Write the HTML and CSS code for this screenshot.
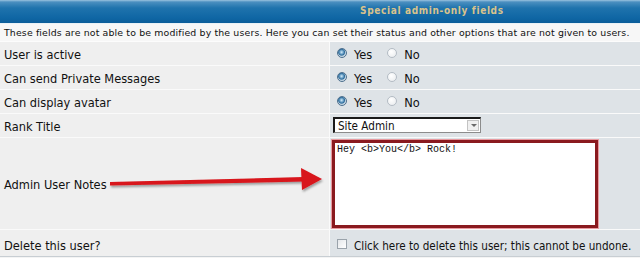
FILE: index.html
```html
<!DOCTYPE html>
<html lang="en">
<head>
    <meta charset="UTF-8">
    <title>Special admin-only fields</title>
    <link rel="stylesheet" href="styles.css">
</head>
<body>

<div class="forumline">
    <div class="th">Special admin-only fields</div>
    <div class="explain">These fields are not able to be modified by the users. Here you can set their status and other options that are not given to users.</div>

    <div class="row">
        <div class="row1">User is active</div>
        <div class="row2">
            <span class="radio checked"></span><span class="opt">Yes</span>
            <span class="radio"></span><span class="opt">No</span>
        </div>
    </div>
    <div class="row">
        <div class="row1">Can send Private Messages</div>
        <div class="row2">
            <span class="radio checked"></span><span class="opt">Yes</span>
            <span class="radio"></span><span class="opt">No</span>
        </div>
    </div>
    <div class="row">
        <div class="row1">Can display avatar</div>
        <div class="row2">
            <span class="radio checked"></span><span class="opt">Yes</span>
            <span class="radio"></span><span class="opt">No</span>
        </div>
    </div>
    <div class="row">
        <div class="row1">Rank Title</div>
        <div class="row2">
            <div class="select">
                <span>Site Admin</span>
                <span class="select-btn"></span>
            </div>
        </div>
    </div>
    <div class="row notes-row">
        <div class="row1">
            Admin User Notes
            <!-- red arrow pointing at the notes box -->
            <svg class="arrow" width="220" height="30" viewBox="0 0 220 30">
                <defs>
                    <filter id="shadow" x="-10%" y="-50%" width="120%" height="200%">
                        <feDropShadow dx="1" dy="2" stdDeviation="1.2" flood-color="#000" flood-opacity="0.35"/>
                    </filter>
                </defs>
                <g filter="url(#shadow)">
                    <path d="M2 18 L196 13 L196 17.5 L2 21.5 Z" fill="#d8141a"/>
                    <path d="M193 4 L214 15 L194 26 Z" fill="#d8141a"/>
                </g>
            </svg>
        </div>
        <div class="row2">
            <div class="notes">Hey &lt;b&gt;You&lt;/b&gt; Rock!</div>
        </div>
    </div>
    <div class="row last">
        <div class="row1">Delete this user?</div>
        <div class="row2">
            <span class="checkbox"></span><span class="opt">Click here to delete this user; this cannot be undone.</span>
        </div>
    </div>
</div>

</body>
</html>
```

FILE: styles.css
```css
body {
    margin: 0;
    padding: 0;
    background-color: #dee3e7;
    font-family: "DejaVu Sans Condensed", "DejaVu Sans", Verdana, sans-serif;
    font-stretch: condensed;
    color: #111;
}

.forumline {
    width: 640px;
    height: 258px;
    background-color: #f4f4f4;
    overflow: hidden;
}

.th {
    height: 24px;
    box-sizing: border-box;
    padding: 5px 0 0 360px;
    background: linear-gradient(#9cc3df 0, #4b8fc0 2px, #1f73ad 8px, #0f66a4 18px, #0b5c98 24px);
    color: #d9c38c;
    font-size: 10px;
    font-weight: bold;
    letter-spacing: 0.65px;
    border-bottom: 1px solid #e9f1f6;
}

.explain {
    height: 18px;
    box-sizing: border-box;
    padding: 3px 0 0 4px;
    background-color: #f7f7f7;
    font-family: "DejaVu Sans", Verdana, sans-serif;
    font-stretch: normal;
    font-size: 9.4px;
    letter-spacing: 0.14px;
    white-space: nowrap;
    border-bottom: 1px solid #fcfcfc;
}

.row {
    display: grid;
    grid-template-columns: 329px 1fr;
    gap: 1px;
    background-color: #fafafa;
    height: 23px;
    border-bottom: 1px solid #fafafa;
}

.row1, .row2 {
    display: flex;
    align-items: center;
    padding-top: 2px;
    font-size: 12.7px;
}

.row1 {
    background-color: #efefef;
    padding-left: 4px;
    position: relative;
}

.row2 {
    background-color: #dee3e7;
    padding-left: 7px;
}

.notes-row {
    height: 91px;
}

.last {
    height: 26px;
    border-bottom: 1px solid #c8ced3;
}

.last .row1, .last .row2 {
    padding-top: 5px;
}

.opt {
    margin-left: 7px;
    margin-right: 15px;
}

.radio {
    width: 10px;
    height: 10px;
    border-radius: 50%;
    box-sizing: border-box;
    border: 1px solid #b4bcc4;
    background: radial-gradient(circle at 40% 35%, #ffffff 0, #eef0f2 70%);
    margin-top: -4px;
}

.radio.checked {
    border-color: #4c6f8d;
    background: radial-gradient(circle at 45% 40%, #d8ecf8 0, #7fb0d2 1.5px, #2f6d9c 3px, #c9d9e5 4px);
}

.select {
    width: 148px;
    height: 16px;
    box-sizing: border-box;
    margin-left: -4px;
    margin-top: -3px;
    background-color: #fff;
    border: 1px solid #8c8c8c;
    border-top: 2px solid #1a1a1a;
    border-left: 2px solid #1a1a1a;
    display: flex;
    align-items: center;
    justify-content: space-between;
    padding-left: 3px;
    font-size: 11.6px;
}

.select-btn {
    width: 12px;
    height: 11px;
    margin-right: 1px;
    box-sizing: border-box;
    border: 1px solid #c3c3c3;
    background: #f0f0f0;
    position: relative;
}

.select-btn::after {
    content: "";
    position: absolute;
    left: 3px;
    top: 3px;
    border-left: 3px solid transparent;
    border-right: 3px solid transparent;
    border-top: 3px solid #6a6a6a;
}

.notes-row .row2 {
    padding-left: 2px;
    align-items: flex-start;
    padding-top: 2px;
}

.notes {
    width: 266px;
    height: 88px;
    box-sizing: border-box;
    background-color: #fff;
    border: 3px solid #8a1a1f;
    box-shadow: 0 0 0 1px #e89aa0;
    padding: 1px 2px;
    font-family: "Liberation Mono", monospace;
    font-size: 10px;
}

.arrow {
    position: absolute;
    left: 108px;
    top: 26px;
}

.checkbox {
    width: 10px;
    height: 10px;
    box-sizing: border-box;
    border: 1px solid #9aa3ab;
    background: linear-gradient(135deg, #e3e6e9, #ffffff);
    margin-top: -3px;
}

.last .opt {
    margin-left: 7px;
    font-size: 11.6px;
    white-space: nowrap;
}
```
